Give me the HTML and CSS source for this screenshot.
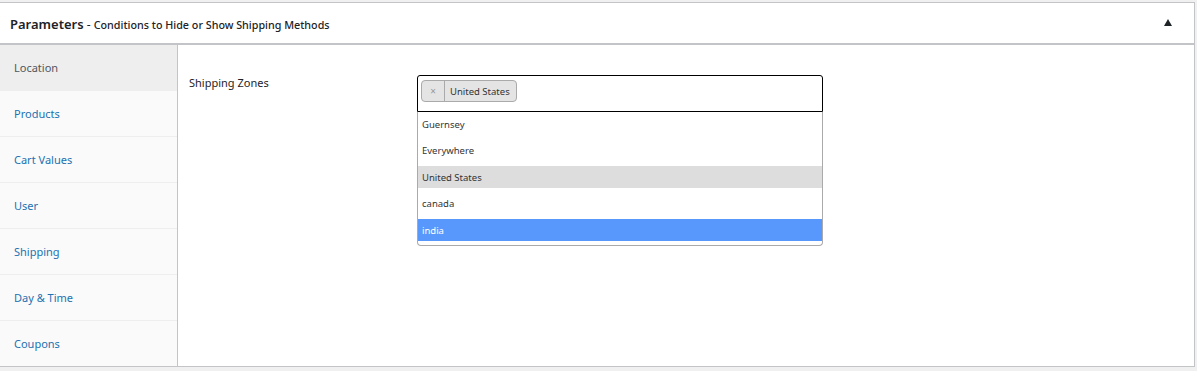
FILE: index.html
```html
<!DOCTYPE html>
<html lang="en">
<head>
    <meta charset="UTF-8">
    <meta name="viewport" content="width=device-width, initial-scale=1.0">
    <title>Parameters</title>
    <link rel="stylesheet" href="styles.css">
</head>
<body>
    <div class="postbox">
        <div class="postbox-header">
            <h2><span class="title">Parameters</span> - <span class="subtitle">Conditions to Hide or Show Shipping Methods</span></h2>
            <span class="toggle"></span>
        </div>
        <div class="postbox-body">
            <ul class="tabs">
                <li class="active">Location</li>
                <li>Products</li>
                <li>Cart Values</li>
                <li>User</li>
                <li>Shipping</li>
                <li>Day &amp; Time</li>
                <li>Coupons</li>
            </ul>
            <div class="panel">
                <div class="field">
                    <label>Shipping Zones</label>
                    <div class="select">
                        <div class="selection">
                            <span class="chip"><span class="chip-remove">×</span><span class="chip-text">United States</span></span>
                        </div>
                        <ul class="dropdown">
                            <li>Guernsey</li>
                            <li>Everywhere</li>
                            <li class="selected">United States</li>
                            <li>canada</li>
                            <li class="highlighted">india</li>
                        </ul>
                    </div>
                </div>
            </div>
        </div>
    </div>
</body>
</html>
```

FILE: styles.css
```css
:root {
    --border-color: #c3c4c7;
    --link-color: #2271b1;
    --text-color: #1d2327;
    --sidebar-bg: #fafafa;
    --page-bg: #f0f0f1;
}

* {
    box-sizing: border-box;
    margin: 0;
    padding: 0;
}

body {
    font-family: "Noto Sans", "Open Sans", Arial, sans-serif;
    background-color: var(--page-bg);
    color: var(--text-color);
    padding-top: 2px;
}

.postbox {
    margin-left: -1px;
    width: 1196px;
    background-color: #fff;
    border: 1px solid var(--border-color);
}

.postbox-header {
    display: flex;
    align-items: center;
    justify-content: space-between;
    height: 42px;
    padding: 0 22px 0 10px;
    border-bottom: 2px solid var(--border-color);
}

.postbox-header h2 {
    font-size: 12px;
    font-weight: 400;
    padding-top: 1px;
}

.title {
    font-size: 13px;
    font-weight: 600;
}

.subtitle {
    font-size: 10.75px;
    font-weight: 500;
}

.toggle {
    width: 0;
    height: 0;
    border-left: 4.5px solid transparent;
    border-right: 4.5px solid transparent;
    border-bottom: 7px solid #1d2327;
    margin-top: -2px;
}

.postbox-body {
    display: flex;
    min-height: 321px;
}

.tabs {
    list-style: none;
    width: 178px;
    background-color: var(--sidebar-bg);
    border-right: 1px solid var(--border-color);
}

.tabs li {
    height: 46px;
    display: flex;
    align-items: center;
    padding-left: 14px;
    font-size: 11px;
    color: var(--link-color);
    border-bottom: 1px solid #eeeeee;
}

.tabs li:last-child {
    height: 45px;
    border-bottom: none;
}

.tabs li.active {
    background-color: #eeeeee;
    color: #50575e;
}

.panel {
    flex: 1;
    padding: 30px 0 0 11px;
}

.field {
    display: flex;
}

.field label {
    width: 228px;
    font-size: 11px;
    line-height: 14px;
    padding-top: 1px;
}

.select {
    width: 406px;
}

.selection {
    display: flex;
    align-items: flex-start;
    height: 37px;
    border: 1px solid #000;
    border-radius: 3px 3px 0 0;
    padding: 4px 3px;
}

.chip {
    display: flex;
    height: 22px;
    background-color: #e4e4e4;
    border: 1px solid #aaaaaa;
    border-radius: 4px;
    font-size: 9.5px;
    color: #333;
}

.chip-remove {
    width: 23px;
    display: flex;
    align-items: center;
    justify-content: center;
    border-right: 1px solid #aaaaaa;
    color: #999;
    font-size: 10px;
}

.chip-text {
    display: flex;
    align-items: center;
    padding: 0 6px 0 5px;
}

.dropdown {
    list-style: none;
    border: 1px solid #aaaaaa;
    border-top: none;
    border-radius: 0 0 4px 4px;
    padding: 1px 0 4px;
    display: flex;
    flex-direction: column;
    gap: 4.5px;
}

.dropdown li {
    height: 22px;
    display: flex;
    align-items: center;
    padding-left: 4px;
    font-size: 9.5px;
    color: #333;
}

.dropdown li.selected {
    background-color: #dddddd;
}

.dropdown li.highlighted {
    background-color: #5897fb;
    color: #fff;
}
```
